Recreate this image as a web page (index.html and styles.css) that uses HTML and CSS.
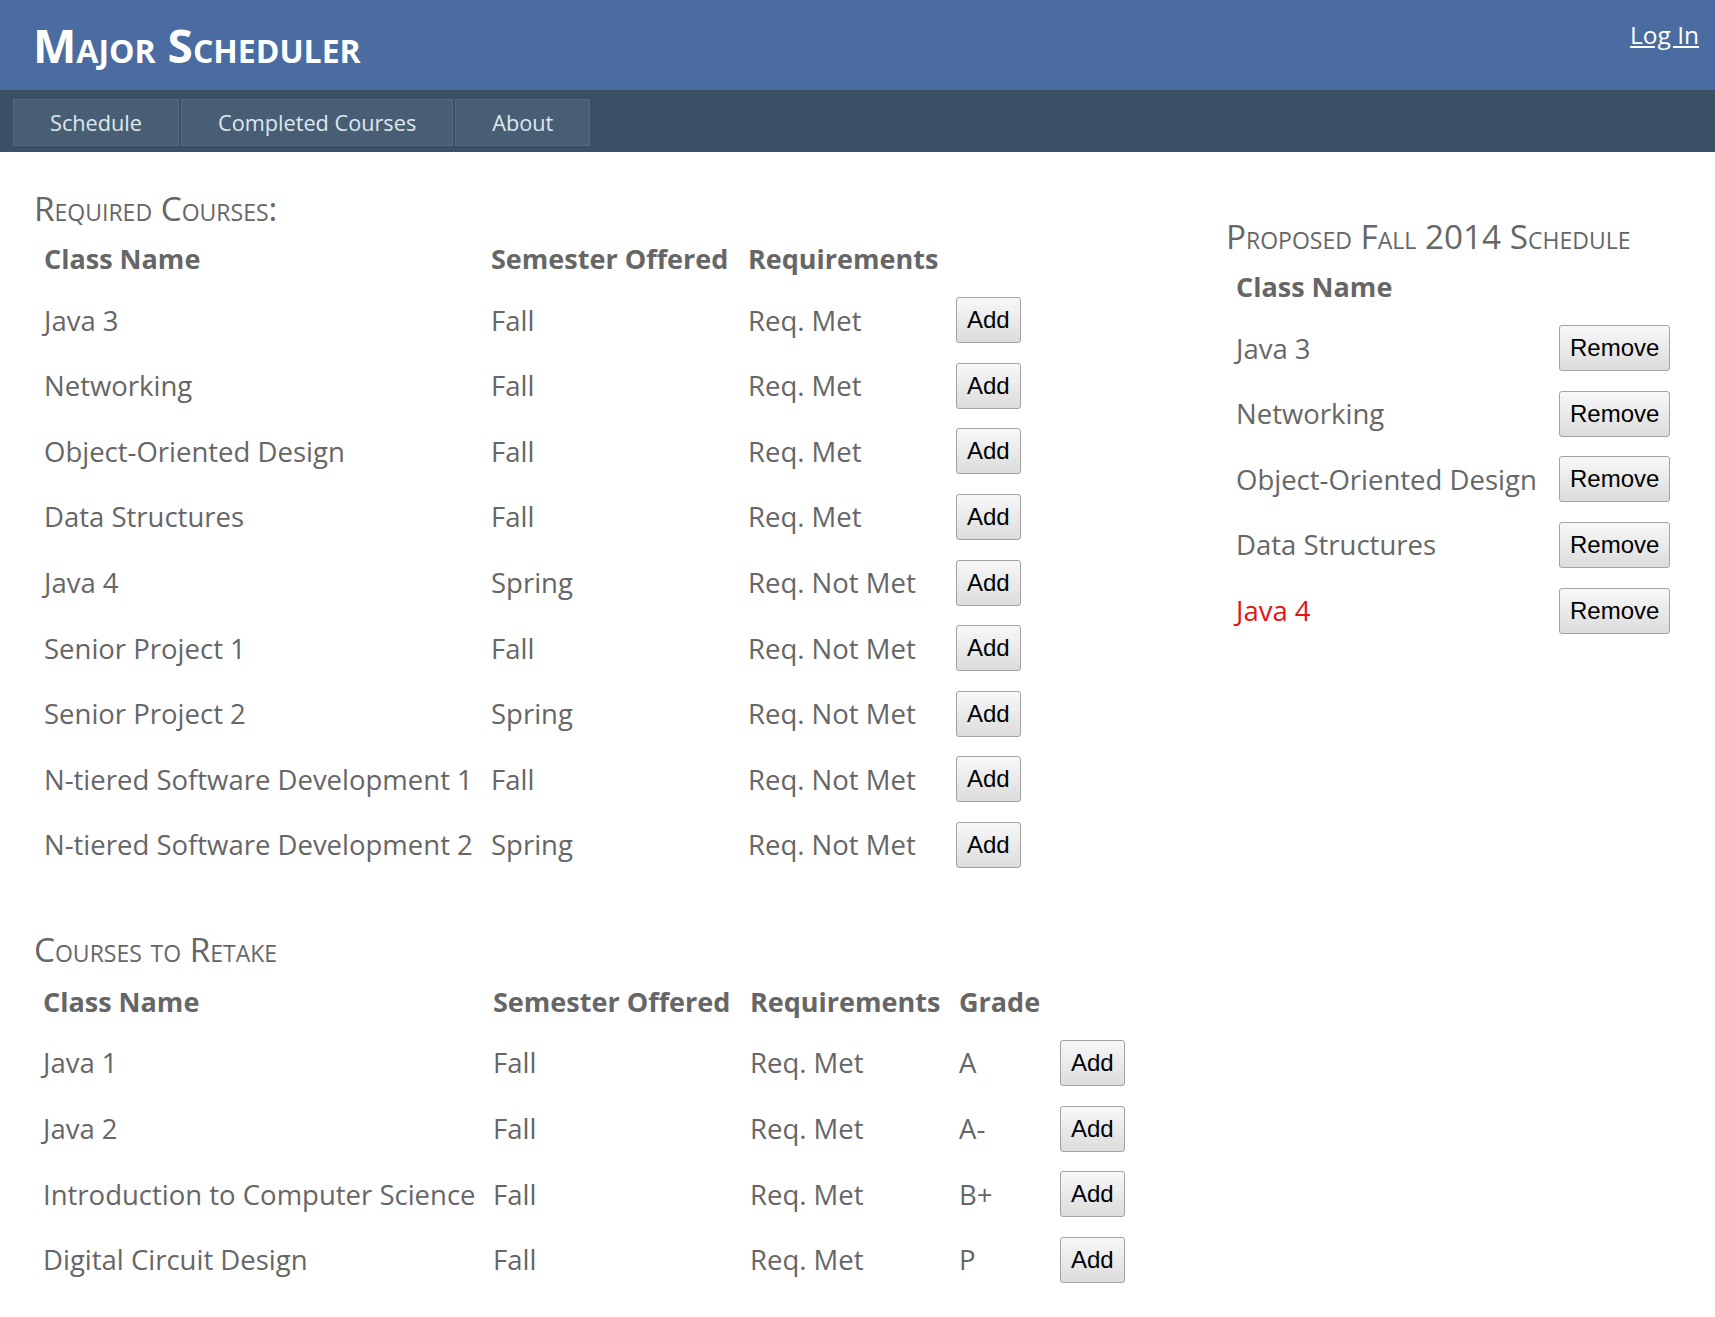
FILE: index.html
```html
<!DOCTYPE html>
<html lang="en">
<head>
<meta charset="utf-8">
<title>Major Scheduler</title>
<link rel="stylesheet" href="styles.css">
</head>
<body>
<header class="topbar">
  <h1 class="brand">Major Scheduler</h1>
  <a class="login" href="#">Log In</a>
</header>
<nav class="tabs">
  <a class="tab" href="#">Schedule</a>
  <a class="tab" href="#">Completed Courses</a>
  <a class="tab" href="#">About</a>
</nav>
<main class="content">
  <div class="left">
    <section class="block">
      <h2 class="section-title">Required Courses:</h2>
      <table class="courses req">
        <colgroup><col class="c-name"><col class="c-sem"><col class="c-req"><col class="c-btn"></colgroup>
        <thead><tr><th>Class Name</th><th>Semester Offered</th><th>Requirements</th><th></th></tr></thead>
        <tbody>
          <tr><td>Java 3</td><td>Fall</td><td>Req. Met</td><td><button class="btn">Add</button></td></tr>
          <tr><td>Networking</td><td>Fall</td><td>Req. Met</td><td><button class="btn">Add</button></td></tr>
          <tr><td>Object-Oriented Design</td><td>Fall</td><td>Req. Met</td><td><button class="btn">Add</button></td></tr>
          <tr><td>Data Structures</td><td>Fall</td><td>Req. Met</td><td><button class="btn">Add</button></td></tr>
          <tr><td>Java 4</td><td>Spring</td><td>Req. Not Met</td><td><button class="btn">Add</button></td></tr>
          <tr><td>Senior Project 1</td><td>Fall</td><td>Req. Not Met</td><td><button class="btn">Add</button></td></tr>
          <tr><td>Senior Project 2</td><td>Spring</td><td>Req. Not Met</td><td><button class="btn">Add</button></td></tr>
          <tr><td>N-tiered Software Development 1</td><td>Fall</td><td>Req. Not Met</td><td><button class="btn">Add</button></td></tr>
          <tr><td>N-tiered Software Development 2</td><td>Spring</td><td>Req. Not Met</td><td><button class="btn">Add</button></td></tr>
        </tbody>
      </table>
    </section>
    <section class="block retake">
      <h2 class="section-title">Courses to Retake</h2>
      <table class="courses ret">
        <colgroup><col class="r-name"><col class="r-sem"><col class="r-req"><col class="r-grade"><col class="r-btn"></colgroup>
        <thead><tr><th>Class Name</th><th>Semester Offered</th><th>Requirements</th><th>Grade</th><th></th></tr></thead>
        <tbody>
          <tr><td>Java 1</td><td>Fall</td><td>Req. Met</td><td>A</td><td><button class="btn">Add</button></td></tr>
          <tr><td>Java 2</td><td>Fall</td><td>Req. Met</td><td>A-</td><td><button class="btn">Add</button></td></tr>
          <tr><td>Introduction to Computer Science</td><td>Fall</td><td>Req. Met</td><td>B+</td><td><button class="btn">Add</button></td></tr>
          <tr><td>Digital Circuit Design</td><td>Fall</td><td>Req. Met</td><td>P</td><td><button class="btn">Add</button></td></tr>
        </tbody>
      </table>
    </section>
  </div>
  <aside class="proposed">
    <h2 class="section-title">Proposed Fall 2014 Schedule</h2>
    <table class="courses sched">
      <colgroup><col class="s-name"><col class="s-btn"></colgroup>
      <thead><tr><th>Class Name</th><th></th></tr></thead>
      <tbody>
        <tr><td>Java 3</td><td><button class="btn">Remove</button></td></tr>
        <tr><td>Networking</td><td><button class="btn">Remove</button></td></tr>
        <tr><td>Object-Oriented Design</td><td><button class="btn">Remove</button></td></tr>
        <tr><td>Data Structures</td><td><button class="btn">Remove</button></td></tr>
        <tr><td class="unmet">Java 4</td><td><button class="btn">Remove</button></td></tr>
      </tbody>
    </table>
  </aside>
</main>
</body>
</html>
```
FILE: styles.css
```css
* { box-sizing: border-box; }

body {
  margin: 0;
  font-family: "Open Sans", "Noto Sans", sans-serif;
  color: #666;
  background: #fff;
}

.topbar {
  height: 90px;
  background: #4a6ca0;
  display: flex;
  justify-content: space-between;
  align-items: flex-start;
  padding: 0 16px 0 33px;
}

.brand {
  margin: 0;
  padding-top: 22px;
  font-size: 46px;
  line-height: 1;
  font-weight: 700;
  font-variant: small-caps;
  color: #fff;
}

.login {
  margin-top: 23px;
  font-size: 24.5px;
  line-height: 1;
  color: #fff;
  text-decoration: underline;
}

.tabs {
  height: 62px;
  background: #3b4f65;
  display: flex;
  gap: 2px;
  padding: 9px 0 0 13px;
}

.tab {
  height: 47px;
  line-height: 46px;
  padding: 0 36px;
  background: #485e75;
  border: 1px solid #54697f;
  color: #dfe7ef;
  font-size: 21.7px;
  text-decoration: none;
}

.content {
  display: flex;
  padding: 0 35px 10px 34px;
}

.left { flex: 1; }

.proposed {
  flex: 0 0 454px;
  padding-top: 28px;
}

.section-title {
  margin: 36px 0 2px 0;
  font-size: 33.3px;
  line-height: 40px;
  font-weight: 400;
  font-variant: small-caps;
  color: #666;
}

.retake { margin-top: 51px; }
.retake .section-title { margin-top: 0; margin-bottom: 4px; }

.courses {
  border-collapse: collapse;
  table-layout: fixed;
}

.courses th,
.courses td {
  padding: 0 10px;
  text-align: left;
  vertical-align: middle;
  white-space: nowrap;
}

.courses th {
  height: 57.4px;
  font-size: 27px;
  font-weight: 700;
  color: #666;
}

.courses td {
  height: 65.6px;
  font-size: 27.5px;
  font-weight: 400;
  color: #666;
}

.courses td.unmet { color: #e31414; }

.req { width: 998px; }
.c-name { width: 447px; }
.c-sem { width: 257px; }
.c-req { width: 208px; }
.c-btn { width: 86px; }

.ret { width: 1101px; margin-left: -1px; }
.r-name { width: 450px; }
.r-sem { width: 257px; }
.r-req { width: 209px; }
.r-grade { width: 101px; }
.r-btn { width: 84px; }

.sched { width: 454px; }
.s-name { width: 323px; }
.s-btn { width: 131px; }

.btn {
  height: 46px;
  padding: 0 10px;
  font-family: "Liberation Sans", Arial, sans-serif;
  font-size: 24px;
  color: #000;
  border: 1px solid #a3a3a3;
  border-radius: 3px;
  background: linear-gradient(#f8f8f8, #dcdcdc);
}
```
